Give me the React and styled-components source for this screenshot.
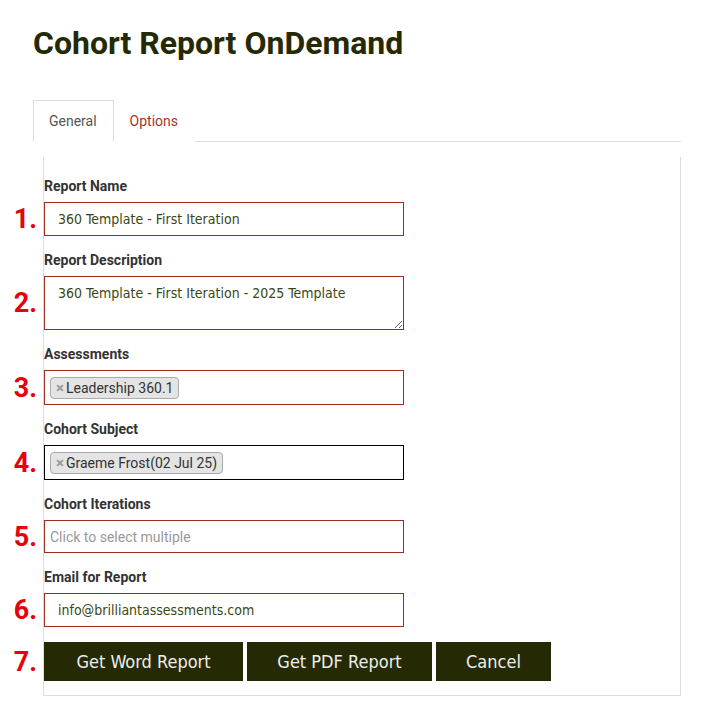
import React from "react";
import styled, { createGlobalStyle } from "styled-components";

const GlobalStyle = createGlobalStyle`
  html, body {
    margin: 0;
    padding: 0;
    background: #fff;
  }
  body {
    font-family: Roboto, "Liberation Sans", sans-serif;
    color: #333;
  }
  * { box-sizing: border-box; }
`;

const Page = styled.div`
  padding: 23px 35px 20px 33px;
  width: 716px;
`;

const Title = styled.h1`
  margin: 0;
  font-family: Roboto, "Liberation Sans", sans-serif;
  font-weight: 700;
  font-size: 32px;
  line-height: 40px;
  color: #252a05;
`;

const Tabs = styled.div`
  display: flex;
  margin-top: 37px;
  border-bottom: 1px solid #ddd;
  height: 42px;
`;

const Tab = styled.div`
  height: 42px;
  padding: 0 16px 0 15px;
  display: flex;
  align-items: center;
  font-size: 14px;
  color: ${(p) => (p.$active ? "#555" : "#a3352a")};
  background: #fff;
  border: 1px solid ${(p) => (p.$active ? "#ddd" : "transparent")};
  border-bottom-color: ${(p) => (p.$active ? "#fff" : "transparent")};
  margin-bottom: -1px;
`;

const Panel = styled.div`
  margin: 15px 0 0 10px;
  border: 1px solid #ddd;
  border-top: none;
  padding: 20px 0 14px 0;
`;

const Group = styled.div`
  position: relative;
  margin-bottom: 15px;
`;

const Label = styled.div`
  font-size: 14px;
  font-weight: 700;
  line-height: 18px;
  color: #333;
  margin-bottom: 7px;
`;

const Field = styled.div`
  position: relative;
  width: ${(p) => (p.$wide ? "auto" : "360px")};
`;

const Marker = styled.span`
  position: absolute;
  right: calc(100% + 7px);
  top: 50%;
  transform: translateY(-50%);
  font-family: Roboto, "Liberation Sans", sans-serif;
  font-weight: 700;
  font-size: 27px;
  color: #e8000b;
  line-height: 1;
`;

const textFont = `
  font-family: "DejaVu Sans Condensed", "DejaVu Sans", sans-serif;
  font-stretch: condensed;
  font-size: 14px;
  color: #3b4712;
`;

const TextBox = styled.div`
  width: 360px;
  height: ${(p) => p.$h || 34}px;
  border: 1px solid ${(p) => (p.$focus ? "#000" : "#9b2c1f")};
  display: flex;
  align-items: center;
  padding: 0 13px;
  ${textFont}
`;

const TextArea = styled.textarea`
  display: block;
  width: 360px;
  height: 54px;
  border: 1px solid #9b2c1f;
  padding: 7px 13px;
  margin: 0;
  resize: vertical;
  outline: none;
  ${textFont}
  line-height: 18px;
`;

const MultiBox = styled.div`
  width: 360px;
  height: ${(p) => p.$h || 35}px;
  border: 1px solid ${(p) => (p.$focus ? "#000" : "#9b2c1f")};
  display: flex;
  align-items: center;
  padding: 0 5px;
`;

const Tag = styled.span`
  display: inline-flex;
  align-items: center;
  height: 22px;
  padding: 0 5px 0 5px;
  background: #e4e4e4;
  border: 1px solid #aaa;
  border-radius: 4px;
  font-size: 14px;
  color: #333;
`;

const TagX = styled.span`
  color: #999;
  font-weight: 700;
  font-size: 15px;
  margin-right: 2px;
`;

const Placeholder = styled.span`
  font-size: 14px;
  color: #999;
`;

const Buttons = styled.div`
  display: flex;
  gap: 4px;
`;

const Button = styled.button`
  flex: none;
  height: 39px;
  width: ${(p) => p.$w}px;
  border: none;
  background: #252a05;
  color: #eee;
  font-family: "DejaVu Sans Condensed", "DejaVu Sans", sans-serif;
  font-stretch: condensed;
  font-size: 18px;
  padding: 0;
  cursor: pointer;
`;

const fields = [
  { n: "1.", label: "Report Name", kind: "text", value: "360 Template - First Iteration" },
  { n: "2.", label: "Report Description", kind: "area", value: "360 Template - First Iteration - 2025 Template" },
  { n: "3.", label: "Assessments", kind: "tag", value: "Leadership 360.1" },
  { n: "4.", label: "Cohort Subject", kind: "tag", value: "Graeme Frost(02 Jul 25)", focus: true },
  { n: "5.", label: "Cohort Iterations", kind: "empty", value: "Click to select multiple" },
  { n: "6.", label: "Email for Report", kind: "text", value: "info@brilliantassessments.com" },
];

function renderField(f) {
  if (f.kind === "area") return <TextArea readOnly defaultValue={f.value} />;
  if (f.kind === "tag")
    return (
      <MultiBox $focus={f.focus}>
        <Tag>
          <TagX>×</TagX>
          {f.value}
        </Tag>
      </MultiBox>
    );
  if (f.kind === "empty")
    return (
      <MultiBox $h={33}>
        <Placeholder>{f.value}</Placeholder>
      </MultiBox>
    );
  return <TextBox>{f.value}</TextBox>;
}

export default function App() {
  return (
    <Page>
      <GlobalStyle />
      <Title>Cohort Report OnDemand</Title>
      <Tabs>
        <Tab $active>General</Tab>
        <Tab>Options</Tab>
      </Tabs>
      <Panel>
        {fields.map((f) => (
          <Group key={f.n}>
            <Label>{f.label}</Label>
            <Field>
              <Marker>{f.n}</Marker>
              {renderField(f)}
            </Field>
          </Group>
        ))}
        <Field $wide>
          <Marker>7.</Marker>
          <Buttons>
            <Button $w={199}>Get Word Report</Button>
            <Button $w={185}>Get PDF Report</Button>
            <Button $w={115}>Cancel</Button>
          </Buttons>
        </Field>
      </Panel>
    </Page>
  );
}
